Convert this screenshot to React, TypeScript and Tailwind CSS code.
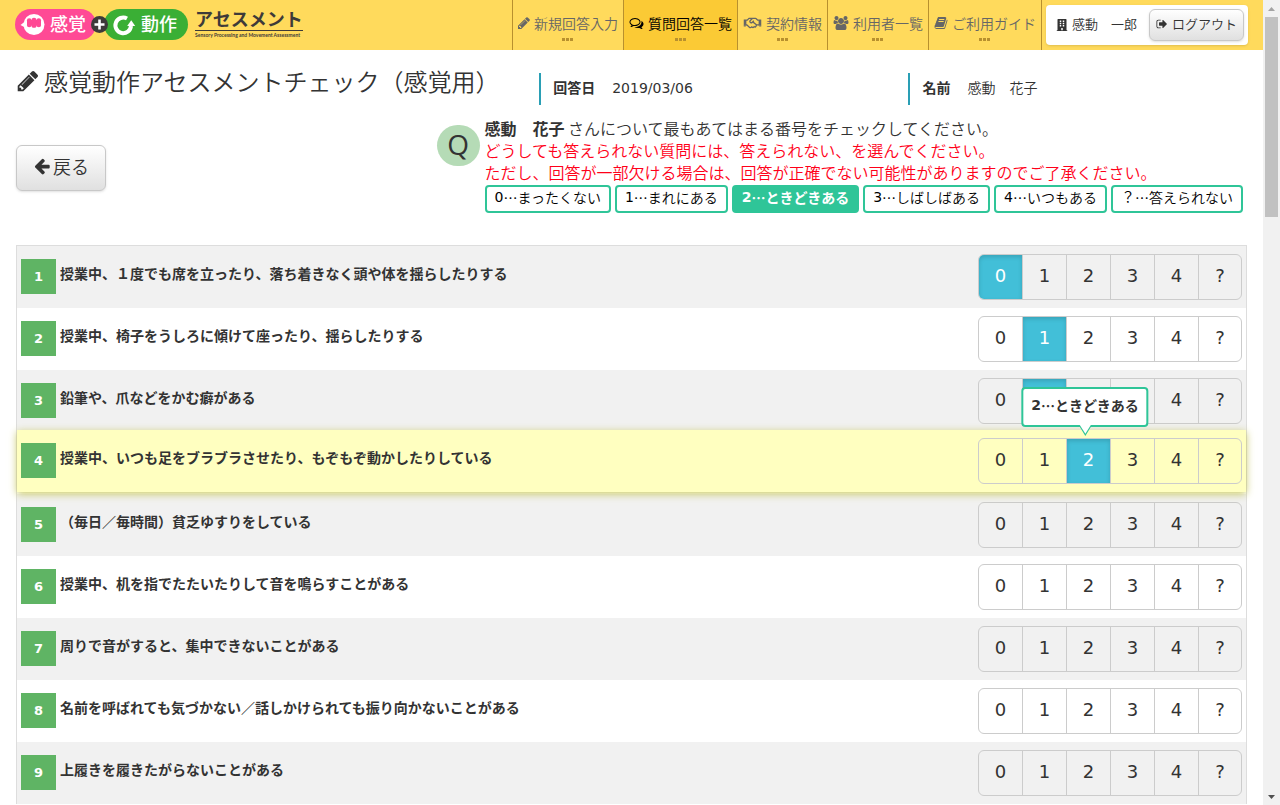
import { useState } from 'react';
import type { ReactNode } from 'react';
import { FaBuilding, FaRegHandshake } from 'react-icons/fa';

interface Question {
  id: number;
  text: string;
}

const questions: Question[] = [
  { id: 1, text: '授業中、１度でも席を立ったり、落ち着きなく頭や体を揺らしたりする' },
  { id: 2, text: '授業中、椅子をうしろに傾けて座ったり、揺らしたりする' },
  { id: 3, text: '鉛筆や、爪などをかむ癖がある' },
  { id: 4, text: '授業中、いつも足をブラブラさせたり、もぞもぞ動かしたりしている' },
  { id: 5, text: '（毎日／毎時間）貧乏ゆすりをしている' },
  { id: 6, text: '授業中、机を指でたたいたりして音を鳴らすことがある' },
  { id: 7, text: '周りで音がすると、集中できないことがある' },
  { id: 8, text: '名前を呼ばれても気づかない／話しかけられても振り向かないことがある' },
  { id: 9, text: '上履きを履きたがらないことがある' },
];

const choices = [
  { value: '0', mark: '0', label: '…まったくない' },
  { value: '1', mark: '1', label: '…まれにある' },
  { value: '2', mark: '2', label: '…ときどきある' },
  { value: '3', mark: '3', label: '…しばしばある' },
  { value: '4', mark: '4', label: '…いつもある' },
  { value: '?', mark: '？', label: '…答えられない' },
];

function Glyph({ d, className, width = 1792 }: { d: string; className: string; width?: number }) {
  return (
    <svg viewBox={`0 0 ${width} 1792`} fill="currentColor" aria-hidden="true" className={className}>
      <path d={d} />
    </svg>
  );
}

const pencil =
  'M491 1536l91-91-235-235-91 91v107h128v128h107zM1014 608q0-22-22-22-10 0-17 7l-542 542q-7 7-7 17 0 22 22 22 10 0 17-7l542-542q7-7 7-17zM960 416l416 416-832 832h-416v-416zM1643 512q0 53-37 90l-166 166-416-416 166-165q36-38 90-38 53 0 91 38l235 234q37 39 37 91z';
const comments =
  'M704 384q-153 0-286 52t-211.5 141-78.5 191q0 82 53 158t149 132l97 56-35 84q34-20 62-39l44-31 53 10q78 14 153 14 153 0 286-52t211.5-141 78.5-191-78.5-191-211.5-141-286-52zm0-128q191 0 353.5 68.5t256.5 186.5 94 257-94 257-256.5 186.5-353.5 68.5q-86 0-176-16-124 88-278 128-36 9-86 16h-3q-11 0-20.5-8t-11.5-21q-1-3-1-6.5t.5-6.5 2-6l2.5-5 3.5-5.5 4-5 4.5-5 4-4.5q5-6 23-25t26-29.5 22.5-29 25-38.5 20.5-44q-124-72-195-177t-71-224q0-139 94-257t256.5-186.5 353.5-68.5zm822 1169q10 24 20.5 44t25 38.5 22.5 29 26 29.5 23 25q1 1 4 4.5t4.5 5 4 5 3.5 5.5l2.5 5 2 6 .5 6.5-1 6.5q-3 14-13 22t-22 7q-50-7-86-16-154-40-278-128-90 16-176 16-271 0-472-132 58 4 88 4 161 0 309-45t264-129q125-92 192-212t67-254q0-77-23-152 129 71 204 178t75 230q0 120-71 224.5t-195 176.5z';
const group =
  'M593 896q-162 5-265 128h-134q-82 0-138-40.5t-56-118.5q0-353 124-353 6 0 43.5 21t97.5 42.5 119 21.5q67 0 133-23-5 37-5 66 0 139 81 256zm1071 637q0 120-73 189.5t-194 69.5h-874q-121 0-194-69.5t-73-189.5q0-53 3.5-103.5t14-109 26.5-108.5 43-97.5 62-81 85.5-53.5 111.5-20q10 0 43 21.5t73 48 107 48 135 21.5 135-21.5 107-48 73-48 43-21.5q61 0 111.5 20t85.5 53.5 62 81 43 97.5 26.5 108.5 14 109 3.5 103.5zm-1024-1277q0 106-75 181t-181 75-181-75-75-181 75-181 181-75 181 75 75 181zm704 384q0 159-112.5 271.5t-271.5 112.5-271.5-112.5-112.5-271.5 112.5-271.5 271.5-112.5 271.5 112.5 112.5 271.5zm576 225q0 78-56 118.5t-138 40.5h-134q-103-123-265-128 81-117 81-256 0-29-5-66 66 23 133 23 59 0 119-21.5t97.5-42.5 43.5-21q124 0 124 353zm-128-609q0 106-75 181t-181 75-181-75-75-181 75-181 181-75 181 75 75 181z';
const book =
  'M1703 478q40 57 18 129l-275 906q-19 64-76.5 107.5t-122.5 43.5h-923q-77 0-148.5-53.5t-99.5-131.5q-24-67-2-127 0-4 3-27t4-37q1-8-3-21.5t-3-19.5q2-11 8-21t16.5-23.5 16.5-23.5q23-38 45-91.5t30-91.5q3-10 .5-30t-.5-28q3-11 17-28t17-23q21-36 42-92t25-90q1-9-2.5-32t.5-28q4-13 22-30.5t22-22.5q19-26 42.5-84.5t27.5-96.5q1-8-3-25.5t-2-26.5q2-8 9-18t18-23 17-21q8-12 16.5-30.5t15-35 16-36 19.5-32 26.5-23.5 36-11.5 47.5 5.5l-1 3q38-9 51-9h761q74 0 114 56t18 130l-274 906q-36 119-71.5 153.5t-128.5 34.5h-869q-27 0-38 15-11 16-1 43 24 70 144 70h923q29 0 56-15.5t35-41.5l300-987q7-22 5-57 38 15 59 43zm-1064 2q-4 13 2 22.5t20 9.5h608q13 0 25.5-9.5t16.5-22.5l21-64q4-13-2-22.5t-20-9.5h-608q-13 0-25.5 9.5t-16.5 22.5zm-83 256q-4 13 2 22.5t20 9.5h608q13 0 25.5-9.5t16.5-22.5l21-64q4-13-2-22.5t-20-9.5h-608q-13 0-25.5 9.5t-16.5 22.5z';
const signOut =
  'M704 1440q0 4 1 20t.5 26.5-3 23.5-10 19.5-20.5 6.5h-320q-119 0-203.5-84.5t-84.5-203.5v-704q0-119 84.5-203.5t203.5-84.5h320q13 0 22.5 9.5t9.5 22.5q0 4 1 20t.5 26.5-3 23.5-10 19.5-20.5 6.5h-320q-66 0-113 47t-47 113v704q0 66 47 113t113 47h312l11.5 1 11.5 3 8 5.5 7 9 2 13.5zm928-544q0 26-19 45l-544 544q-19 19-45 19t-45-19-19-45v-288h-448q-26 0-45-19t-19-45v-384q0-26 19-45t45-19h448v-288q0-26 19-45t45-19 45 19l544 544q19 19 19 45z';
const arrowLeft =
  'M1664 896v128q0 53-32.5 90.5t-84.5 37.5h-704l293 294q38 36 38 90t-38 90l-75 76q-37 37-90 37-52 0-91-37l-651-652q-37-37-37-90 0-52 37-91l651-650q38-38 91-38 52 0 90 38l75 74q38 38 38 91t-38 91l-293 293h704q52 0 84.5 37.5t32.5 90.5z';

const navItems = [
  { label: '新規回答入力', icon: <Glyph d={pencil} className="size-3.5 -mx-px" /> },
  { label: '質問回答一覧', icon: <Glyph d={comments} className="h-3.5 w-[15px]" />, active: true },
  { label: '契約情報', icon: <FaRegHandshake className="h-3.5 w-[19px]" /> },
  { label: '利用者一覧', icon: <Glyph d={group} width={1920} className="h-3.5 w-4" /> },
  { label: 'ご利用ガイド', icon: <Glyph d={book} className="size-3.5" /> },
];

function Logo() {
  return (
    <svg viewBox="0 -6 296 46" className="h-[46px] w-[296px]" role="img" aria-label="感覚＋動作アセスメント">
      <rect x="0" y="1" width="81" height="31" rx="15.5" fill="#ff4a95" />
      <rect x="89" y="1" width="84" height="31" rx="15.5" fill="#3aaf35" />
      <circle cx="84.5" cy="16.5" r="8.5" fill="#3e3a39" />
      <path d="M84.5 11.5v10M79.5 16.5h10" stroke="#fff" strokeWidth="2.6" />

      <circle cx="19" cy="16.5" r="10.5" fill="#fff" />
      <path d="M10 13.5L5.5 17l4.5 2.500z" fill="#fff" />
      <g fill="#ff4a95">
        <rect x="12" y="12" width="14" height="5.5" />
        <circle cx="14.2" cy="12.6" r="2.3" />
        <circle cx="19" cy="12.4" r="2.6" />
        <circle cx="23.8" cy="12.6" r="2.3" />
        <circle cx="14.2" cy="17" r="2.300" />
        <circle cx="19" cy="17.200" r="2.600" />
        <circle cx="23.800" cy="17" r="2.300" />
      </g>

      <path d="M112 10.5A7.8 7.8 0 1 0 116 18" fill="none" stroke="#fff" strokeWidth="4" />
      <path d="M112.2 18l4-5.800 4 5.800z" fill="#fff" />

      <g fill="#fff" fontSize="18" fontWeight="500">
        <text x="35" y="23">感覚</text>
        <text x="126" y="23">動作</text>
      </g>
      <text x="180" y="18" fontSize="18" fontWeight="700" fill="#3e3a39">
        アセスメント
      </text>
      <path d="M180 22.5h108" stroke="#3e3a39" />
      <text x="180" y="29" fontSize="5" fontWeight="700" fill="#3e3a39" fontFamily="Lato, sans-serif">
        Sensory Processing and Movement Assessment
      </text>
    </svg>
  );
}

function Header() {
  return (
    <header className="flex h-[50px] items-center bg-[#ffda5c] px-[15px]">
      <a href="#" className="shrink-0">
        <Logo />
      </a>
      <nav className="ml-auto flex h-full border-r border-[#b8902e]">
        {navItems.map((item) => (
          <a
            key={item.label}
            href="#"
            className={
              item.active
                ? 'flex flex-col items-center border-l border-[#b8902e] bg-[#fbca35] px-[5px] pt-[13px] text-black'
                : 'flex flex-col items-center border-l border-[#b8902e] px-[5px] pt-[13px] text-[#666]'
            }
          >
            <span className="flex items-center gap-1 whitespace-nowrap text-sm leading-5">
              {item.icon}
              {item.label}
            </span>
            <span className="mt-[5px] flex gap-px">
              <i className="size-[3px] bg-[#b8902e]" />
              <i className="size-[3px] bg-[#b8902e]" />
              <i className="size-[3px] bg-[#b8902e]" />
            </span>
          </a>
        ))}
      </nav>
      <div className="ml-1 flex h-10 items-center rounded bg-white pl-2.5 pr-1 text-[13px] shadow-sm">
        <FaBuilding className="mr-1 size-3" />
        <span className="whitespace-nowrap pb-0.5">感動　一郎</span>
        <GradientButton className="ml-3 h-8 gap-1 px-1.5 pb-0.5">
          <Glyph d={signOut} className="size-3" />
          ログアウト
        </GradientButton>
      </div>
    </header>
  );
}

function GradientButton({ className, children }: { className: string; children: ReactNode }) {
  return (
    <button
      type="button"
      className={`flex items-center whitespace-nowrap rounded-md border border-[#c8c8c8] bg-linear-to-b from-white to-[#e0e0e0] shadow-sm ${className}`}
    >
      {children}
    </button>
  );
}

function Digit({ children, bold }: { children: ReactNode; bold?: boolean }) {
  return (
    <span
      className={
        bold
          ? "font-['DejaVu_Sans','Noto_Sans_CJK_JP',sans-serif] font-bold"
          : "font-['DejaVu_Sans','Noto_Sans_CJK_JP',sans-serif] font-normal"
      }
    >
      {children}
    </span>
  );
}

function InfoField({ label, children }: { label: string; children: ReactNode }) {
  return (
    <dl className="mt-[11px] flex h-8 items-center gap-[17px] border-l-2 border-[#2a9fb5] pb-1 pl-3 text-sm">
      <dt className="font-bold">{label}</dt>
      <dd>{children}</dd>
    </dl>
  );
}

function Legend({ current }: { current: string }) {
  return (
    <ul className="mt-0.5 flex gap-1 text-sm">
      {choices.map((c) => (
        <li
          key={c.value}
          className={
            c.value === current
              ? 'flex h-7 items-center whitespace-nowrap rounded border-2 border-[#2fc598] bg-[#2fc598] px-2 pb-1 font-bold text-white'
              : 'flex h-7 items-center whitespace-nowrap rounded border-2 border-[#2fc598] bg-white px-2 pb-1 text-black'
          }
        >
          <Digit bold={c.value === current}>{c.mark}</Digit>
          {c.label}
        </li>
      ))}
    </ul>
  );
}

function Tooltip({ value }: { value: string }) {
  const choice = choices.find((c) => c.value === value);
  if (!choice) return null;

  return (
    <span
      role="tooltip"
      className="absolute bottom-14 left-[18px] z-20 flex h-10 -translate-x-1/2 items-center whitespace-nowrap rounded border-2 border-[#2fc598] bg-white px-2 pb-1 font-['Noto_Sans_CJK_JP',sans-serif] text-sm font-bold text-[#333]"
    >
      <Digit bold>{choice.mark}</Digit>
      {choice.label}
      <svg viewBox="0 0 14 12" className="absolute left-1/2 top-full h-3 w-3.5 -translate-x-1/2" aria-hidden="true">
        <path d="M0 0h14v2h-1.500L7 11 1.500 2H0z" fill="#2fc598" />
        <path d="M1.500 0h11L7 8.800z" fill="#fff" />
      </svg>
    </span>
  );
}

interface QuestionRowProps {
  question: Question;
  answer?: string;
  focused: boolean;
  onAnswer: (value: string) => void;
}

function QuestionRow({ question, answer, focused, onAnswer }: QuestionRowProps) {
  return (
    <li
      className={
        focused
          ? 'relative z-10 flex -translate-y-0.5 items-start gap-1 bg-[#ffffc0] px-1 py-2 shadow-[0_2px_8px_#c8c864]'
          : 'flex items-start gap-1 px-1 py-2 odd:bg-[#f1f1f1]'
      }
    >
      <span className="mt-[5px] flex size-[35px] shrink-0 items-center justify-center bg-[#5fb464] font-['DejaVu_Sans',sans-serif] text-[13px] font-bold text-white">
        {question.id}
      </span>
      <p id={`q${question.id}`} className="mt-[9px] flex-1 text-sm font-bold">
        {question.text}
      </p>
      <div
        role="radiogroup"
        aria-labelledby={`q${question.id}`}
        className="flex h-[46px] rounded-md border border-[#ccc]"
      >
        {choices.map((c) => (
          <label
            key={c.value}
            className="relative flex w-11 cursor-pointer items-center justify-center border-l border-[#ccc] pb-0.5 font-['DejaVu_Sans',sans-serif] text-lg font-normal first:w-[43px] first:rounded-l-[5px] first:border-l-0 last:w-[43px] has-checked:bg-[#42bfd8] has-checked:text-white has-checked:shadow-[inset_0_2px_4px_#00000026]"
          >
            <input
              type="radio"
              name={`answer-${question.id}`}
              value={c.value}
              checked={answer === c.value}
              onChange={() => onAnswer(c.value)}
              className="sr-only"
            />
            {c.value}
            {focused && answer === c.value && <Tooltip value={c.value} />}
          </label>
        ))}
      </div>
    </li>
  );
}

function ScrollRail() {
  return (
    <div className="flex w-[17px] shrink-0 flex-col items-center bg-[#f1f1f1]" aria-hidden="true">
      <svg viewBox="0 0 17 17" className="size-[17px]">
        <path d="M5 11l3.500-4 3.500 4z" fill="#a3a3a3" />
      </svg>
      <div className="h-[200px] w-[13px] bg-[#c1c1c1]" />
      <svg viewBox="0 0 17 17" className="mt-auto size-[17px]">
        <path d="M5 7l3.500 4L12 7z" fill="#505050" />
      </svg>
    </div>
  );
}

export default function App() {
  const [answers, setAnswers] = useState<Record<number, string>>({ 1: '0', 2: '1', 3: '1', 4: '2' });
  const [focusedId, setFocusedId] = useState(4);

  const handleAnswer = (id: number, value: string) => {
    setAnswers({ ...answers, [id]: value });
    setFocusedId(id);
  };

  return (
    <div
      lang="ja"
      className="flex h-screen overflow-hidden bg-white font-['Noto_Sans_CJK_JP',sans-serif] font-[350] text-[#333]"
    >
      <div className="min-w-0 flex-1 overflow-hidden">
        <Header />
        <main className="px-4 pt-3">
          <div className="grid grid-cols-[17fr_12fr_11fr]">
            <h1 className="flex h-[38px] items-center gap-1 whitespace-nowrap text-2xl font-[350]">
              <Glyph d={pencil} className="size-6" />
              感覚動作アセスメントチェック（感覚用）
            </h1>
            <InfoField label="回答日">
              <Digit>2019/03/06</Digit>
            </InfoField>
            <InfoField label="名前">感動　花子</InfoField>
          </div>

          <div className="mt-3 flex items-start justify-between pr-1">
            <GradientButton className="mt-7 h-[46px] gap-0.5 px-4 pb-1 text-lg">
              <Glyph d={arrowLeft} className="size-[18px]" />
              戻る
            </GradientButton>
            <div className="flex gap-[5px]">
              <span className="mt-2 flex h-[41px] w-[43px] shrink-0 items-center justify-center rounded-full bg-[#b5dbb6] pb-1 font-['Open_Sans',sans-serif] text-[28px] font-normal">
                Q
              </span>
              <div>
                <p className="text-base leading-[22px]">
                  <strong className="font-bold">感動　花子</strong> さんについて最もあてはまる番号をチェックしてください。
                </p>
                <p className="text-base leading-[22px] text-[#ff0019]">
                  どうしても答えられない質問には、答えられない、を選んでください。
                  <br />
                  ただし、回答が一部欠ける場合は、回答が正確でない可能性がありますのでご了承ください。
                </p>
                <Legend current={answers[focusedId]} />
              </div>
            </div>
          </div>

          <ol className="mt-8 border-x border-t border-[#ddd]">
            {questions.map((q) => (
              <QuestionRow
                key={q.id}
                question={q}
                answer={answers[q.id]}
                focused={q.id === focusedId}
                onAnswer={(value) => handleAnswer(q.id, value)}
              />
            ))}
          </ol>
        </main>
      </div>
      <ScrollRail />
    </div>
  );
}
